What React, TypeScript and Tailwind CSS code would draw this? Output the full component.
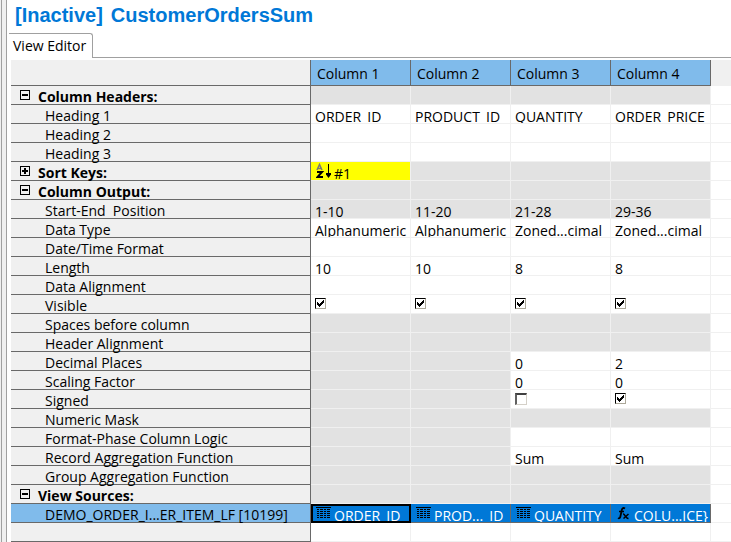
import { useState, type ReactNode } from "react";

type Cell = { kind?: "off" | "check" | "uncheck" | "sort" | "field" | "formula"; text?: string };
type Row = { label: string; group?: boolean; open?: boolean; selected?: boolean; cells: Cell[] };

const off: Cell = { kind: "off" };
const blank: Cell = {};
const check: Cell = { kind: "check" };
const t = (text: string): Cell => ({ text });
const offText = (text: string): Cell => ({ kind: "off", text });
const four = (c: Cell): Cell[] => [c, c, c, c];

const rows: Row[] = [
  { label: "Column Headers:", group: true, open: true, cells: four(off) },
  { label: "Heading 1", cells: [t("ORDER_ID"), t("PRODUCT_ID"), t("QUANTITY"), t("ORDER_PRICE")] },
  { label: "Heading 2", cells: four(blank) },
  { label: "Heading 3", cells: four(blank) },
  { label: "Sort Keys:", group: true, cells: [{ kind: "sort", text: "#1" }, off, off, off] },
  { label: "Column Output:", group: true, open: true, cells: four(off) },
  { label: "Start-End  Position", cells: [offText("1-10"), offText("11-20"), offText("21-28"), offText("29-36")] },
  { label: "Data Type", cells: [t("Alphanumeric"), t("Alphanumeric"), t("Zoned...cimal"), t("Zoned...cimal")] },
  { label: "Date/Time Format", cells: four(blank) },
  { label: "Length", cells: [t("10"), t("10"), t("8"), t("8")] },
  { label: "Data Alignment", cells: four(blank) },
  { label: "Visible", cells: four(check) },
  { label: "Spaces before column", cells: four(off) },
  { label: "Header Alignment", cells: four(off) },
  { label: "Decimal Places", cells: [off, off, t("0"), t("2")] },
  { label: "Scaling Factor", cells: [off, off, t("0"), t("0")] },
  { label: "Signed", cells: [off, off, { kind: "uncheck" }, check] },
  { label: "Numeric Mask", cells: four(off) },
  { label: "Format-Phase Column Logic", cells: [off, off, blank, blank] },
  { label: "Record Aggregation Function", cells: [off, off, t("Sum"), t("Sum")] },
  { label: "Group Aggregation Function", cells: four(off) },
  { label: "View Sources:", group: true, open: true, cells: four(off) },
  {
    label: "DEMO_ORDER_I...ER_ITEM_LF [10199]",
    selected: true,
    cells: [
      { kind: "field", text: "ORDER_ID" },
      { kind: "field", text: "PROD..._ID" },
      { kind: "field", text: "QUANTITY" },
      { kind: "formula", text: "COLU...ICE}" },
    ],
  },
  { label: "", cells: four(blank) },
];

function Toggle({ open, label }: { open: boolean; label: string }) {
  const [expanded, setExpanded] = useState(open);
  return (
    <button
      type="button"
      aria-label={label}
      aria-expanded={expanded}
      onClick={() => setExpanded(!expanded)}
      className="block size-[10px] shrink-0"
    >
      <svg viewBox="0 0 10 10" className="block size-[10px]" shapeRendering="crispEdges">
        <path d="M.5.5h9v9h-9z" fill="none" stroke="#000" />
        <path d={expanded ? "M2 4h6v2H2z" : "M2 4h6v2H2zM4 2h2v6H4z"} />
      </svg>
    </button>
  );
}

function CheckBox({ checked, label }: { checked: boolean; label: string }) {
  return (
    <label className="grid w-3">
      <input
        type="checkbox"
        defaultChecked={checked}
        aria-label={label}
        className="peer col-start-1 row-start-1 size-3 appearance-none border border-t-2 border-l-2 border-[#d4d0c8] border-t-[#404040] border-l-[#606060] bg-white checked:size-[11px] checked:border checked:border-[#aca899] checked:border-t-black checked:border-l-black"
      />
      <svg
        viewBox="0 0 11 11"
        className="pointer-events-none invisible col-start-1 row-start-1 block size-[11px] peer-checked:visible"
        shapeRendering="crispEdges"
      >
        <path d="M2 4h1v1h1v1h1V5h1V4h1V3h1V2h1v3H8v1H7v1H6v1H5v1H4V8H3V7H2z" />
      </svg>
    </label>
  );
}

function SortIcon() {
  return (
    <svg viewBox="0 0 15 16" className="block h-4 w-[15px] shrink-0" fill="none">
      <path d="M1 7 3.500 1.500 6 7M2 5.500h3" stroke="#777" strokeWidth={1.5} />
      <path d="M1 9h5L1.500 14H7" stroke="#000" strokeWidth={2} />
      <path d="M12 1h1v10h-1z" fill="#000" shapeRendering="crispEdges" />
      <path d="M10 10h5v1.500L12.500 15 10 11.500z" fill="#000" />
    </svg>
  );
}

function FieldIcon() {
  return (
    <svg viewBox="0 0 15 12" className="block h-3 w-[15px] shrink-0" shapeRendering="crispEdges">
      <path
        d="M0 0h15v1H0zM1 2h2v1H1zM1 4h2v1H1zM1 6h2v1H1zM1 8h2v1H1zM1 10h2v1H1zM4 2h3v1H4zM4 4h3v1H4zM4 6h3v1H4zM4 8h3v1H4zM4 10h3v1H4zM8 2h2v1H8zM8 4h2v1H8zM8 6h2v1H8zM8 8h2v1H8zM8 10h2v1H8zM11 2h3v1h-3zM11 4h3v1h-3zM11 6h3v1h-3zM11 8h3v1h-3zM11 10h3v1h-3z"
        fill="#000"
      />
    </svg>
  );
}

function FormulaIcon() {
  return (
    <svg viewBox="0 0 15 13" className="block h-[13px] w-[15px] shrink-0" fill="none" stroke="#000">
      <path d="M9 1.500C7.500.5 6.200 1 5.800 3L4.500 9C4.200 11 3.300 11.800 2 11" strokeWidth={1.8} />
      <path d="M3 4.500h5" strokeWidth={1.5} />
      <path d="M7 7c2-.5 2.500 4.500 5.500 4.500M12.500 7 7.500 11.500" strokeWidth={1.5} />
    </svg>
  );
}

function DataCell({ cell, row, index }: { cell: Cell; row: Row; index: number }) {
  const kind = cell.kind;
  const isSource = kind === "field" || kind === "formula";
  const isCheck = kind === "check" || kind === "uncheck";
  let content: ReactNode = <span>{cell.text}</span>;
  if (isCheck) {
    content = <CheckBox checked={kind === "check"} label={`${row.label} column ${index + 1}`} />;
  } else if (kind === "sort" || isSource) {
    content = (
      <>
        <span className={`pl-px ${isSource ? "pt-[3px]" : "pt-px"}`}>
          {kind === "sort" ? <SortIcon /> : kind === "field" ? <FieldIcon /> : <FormulaIcon />}
        </span>
        <span className="pl-[3px]">{cell.text}</span>
      </>
    );
  }
  const tone = isSource
    ? "border-[#696969] bg-[#0078d7] text-white"
    : kind === "off"
      ? "border-[#f0f0f0] bg-[#e2e2e2]"
      : kind === "sort"
        ? "border-[#f0f0f0] bg-[#ffff00]"
        : "border-[#f0f0f0] bg-white";
  const focus = isSource && index === 0 ? "outline-2 -outline-offset-2 outline-black" : "";
  return (
    <td className={`border-r border-b p-0 ${tone} ${focus}`}>
      <div
        className={`flex h-[18px] items-start overflow-hidden pl-1 leading-6 whitespace-nowrap ${isCheck ? "pt-[3px]" : ""}`}
      >
        {content}
      </div>
    </td>
  );
}

export default function App() {
  return (
    <div className="flex min-h-screen bg-white font-['Open_Sans','Noto_Sans',sans-serif] text-sm text-black">
      <div className="w-[7px] shrink-0 border-r border-[#a0a0a0] bg-[#f0f0f0]">
        <div className="h-full w-[2px] border-r border-[#a0a0a0]" />
      </div>
      <main className="min-w-0 flex-1 pl-[2px]">
        <h1 className="flex h-[33px] gap-2 pl-[6px] font-['Liberation_Sans',Arial,sans-serif] text-xl leading-[30px] font-bold whitespace-nowrap text-[#0078d7]">
          <span>[Inactive]</span>
          <span>CustomerOrdersSum</span>
        </h1>
        <div role="tablist" className="flex h-[25px]">
          <button
            type="button"
            role="tab"
            aria-selected="true"
            className="w-[84px] rounded-tr-[3px] border-t border-r border-[#a0a0a0] pl-1 text-left leading-6 whitespace-nowrap"
          >
            View Editor
          </button>
          <div className="flex-1 border-b border-[#a0a0a0]" />
        </div>
        <div className="pt-[2px] pl-[2px]">
          <table className="w-full table-fixed border-separate border-spacing-0">
            <colgroup>
              <col className="w-[300px]" />
              <col className="w-[100px]" />
              <col className="w-[100px]" />
              <col className="w-[100px]" />
              <col className="w-[100px]" />
              <col />
            </colgroup>
            <thead>
              <tr className="h-[26px]">
                <td className="border-r border-b border-[#696969] bg-[#f0f0f0] p-0" />
                {["Column 1", "Column 2", "Column 3", "Column 4"].map((c) => (
                  <th
                    key={c}
                    scope="col"
                    className="border-r border-b border-[#696969] bg-[#80bbeb] p-0 pt-[2px] pl-[6px] text-left font-normal"
                  >
                    {c}
                  </th>
                ))}
                <td className="border-b border-[#f0f0f0] bg-[#f0f0f0] p-0" />
              </tr>
            </thead>
            <tbody>
              {rows.map((row, i) => (
                <tr key={i} className="h-[19px]">
                  <th
                    scope="row"
                    className={`border-r border-b border-[#696969] p-0 text-left ${row.selected ? "bg-[#80bbeb]" : "bg-[#f0f0f0]"} ${row.group ? "font-bold" : "font-normal"}`}
                  >
                    <div
                      className={`flex h-[18px] items-start pt-px leading-5 whitespace-pre ${row.group ? "gap-2 pl-[9px]" : "pl-[34px]"}`}
                    >
                      {row.group && (
                        <span className="pt-[3px]">
                          <Toggle open={!!row.open} label={`Toggle ${row.label}`} />
                        </span>
                      )}
                      <span>{row.label}</span>
                    </div>
                  </th>
                  {row.cells.map((cell, j) => (
                    <DataCell key={j} cell={cell} row={row} index={j} />
                  ))}
                  <td className="border-b border-[#f0f0f0] bg-white p-0" />
                </tr>
              ))}
            </tbody>
          </table>
        </div>
      </main>
    </div>
  );
}
